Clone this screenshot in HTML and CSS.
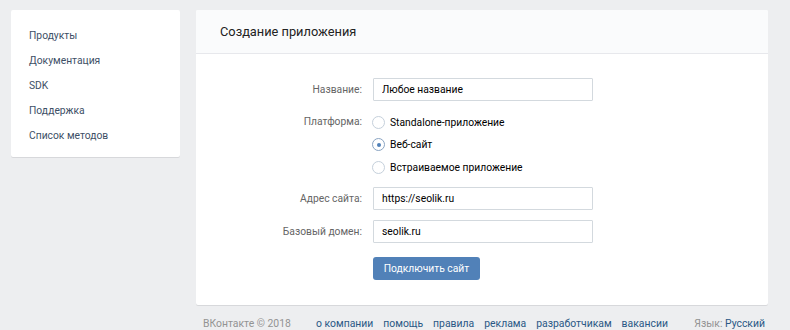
FILE: index.html
```html
<!DOCTYPE html>
<html lang="ru">
<head>
    <meta charset="UTF-8">
    <title>Создание приложения</title>
    <link rel="stylesheet" href="styles.css">
</head>
<body>

<div class="page">
    <div class="side">
        <a class="side-link" href="#">Продукты</a>
        <a class="side-link" href="#">Документация</a>
        <a class="side-link" href="#">SDK</a>
        <a class="side-link" href="#">Поддержка</a>
        <a class="side-link" href="#">Список методов</a>
    </div>

    <div class="main">
        <div class="card">
            <div class="card-head">Создание приложения</div>
            <div class="form">
                <div class="row">
                    <div class="label">Название:</div>
                    <div class="field"><input class="input" type="text" value="Любое название"></div>
                </div>
                <div class="row row-top">
                    <div class="label label-radio">Платформа:</div>
                    <div class="field">
                        <label class="radio"><span class="dot"></span>Standalone-приложение</label>
                        <label class="radio on"><span class="dot"></span>Веб-сайт</label>
                        <label class="radio"><span class="dot"></span>Встраиваемое приложение</label>
                    </div>
                </div>
                <div class="row">
                    <div class="label">Адрес сайта:</div>
                    <div class="field"><input class="input" type="text" value="https://seolik.ru"></div>
                </div>
                <div class="row">
                    <div class="label">Базовый домен:</div>
                    <div class="field"><input class="input" type="text" value="seolik.ru"></div>
                </div>
                <div class="row row-btn">
                    <div class="label"></div>
                    <div class="field"><button class="btn">Подключить сайт</button></div>
                </div>
            </div>
        </div>

        <div class="footer">
            <span class="copy">ВКонтакте © 2018</span>
            <span class="links">
                <a href="#">о компании</a>
                <a href="#">помощь</a>
                <a href="#">правила</a>
                <a href="#">реклама</a>
                <a href="#">разработчикам</a>
                <a href="#">вакансии</a>
            </span>
            <span class="lang">Язык: <a href="#">Русский</a></span>
        </div>
    </div>
</div>

</body>
</html>
```

FILE: styles.css
```css
/* общий фон */
body {
    margin: 0;
    background-color: #edeef0;
    font-family: Roboto, "Open Sans", Arial, sans-serif;
    font-size: 10.3px;
    color: #000;
}
a {
    text-decoration: none;
}
.page {
    display: flex;
    align-items: flex-start;
    gap: 16px;
    padding: 10px 0 0 11px;
}

/* левое меню */
.side {
    width: 169px;
    box-sizing: border-box;
    padding: 13px 0 9px 18px;
    background-color: #fff;
    border-radius: 2px;
    box-shadow: 0 1px 0 0 #d7d8db;
}
.side-link {
    display: block;
    line-height: 25px;
    color: #3d4f66;
}

/* основная карточка */
.main {
    width: 572px;
}
.card {
    background-color: #fff;
    border-radius: 2px;
    box-shadow: 0 1px 0 0 #d7d8db;
}
.card-head {
    height: 43px;
    line-height: 44px;
    padding-left: 24px;
    font-size: 12.8px;
    color: #222;
    background-color: #fafbfc;
    border-bottom: 1px solid #e7e8ec;
    border-radius: 2px 2px 0 0;
}
.form {
    padding: 24px 0 25px;
}
.row {
    display: flex;
    align-items: center;
    margin-bottom: 10px;
}
.row-top {
    align-items: flex-start;
    margin-bottom: 8px;
}
.row-btn {
    margin-top: 14px;
    margin-bottom: 0;
}
.label {
    width: 166px;
    flex-shrink: 0;
    text-align: right;
    color: #656565;
}
.label-radio {
    line-height: 22px;
}
.field {
    margin-left: 11px;
}
.input {
    display: block;
    width: 220px;
    height: 23px;
    box-sizing: border-box;
    padding: 0 8px;
    border: 1px solid #d3d9de;
    border-radius: 1px;
    font-family: inherit;
    font-size: 10.3px;
    color: #000;
}

/* радиокнопки */
.radio {
    display: flex;
    align-items: center;
    height: 22.5px;
    color: #000;
}
.dot {
    width: 11px;
    height: 11px;
    border: 1px solid #c5d0db;
    border-radius: 50%;
    margin: 0 5px 0 -1px;
    box-sizing: content-box;
    position: relative;
}
.radio.on .dot {
    border-color: #8aa4c2;
}
.radio.on .dot::after {
    content: "";
    position: absolute;
    left: 3.5px;
    top: 3.5px;
    width: 4px;
    height: 4px;
    border-radius: 50%;
    background-color: #5181b8;
}

.btn {
    display: block;
    width: 107px;
    height: 23px;
    padding: 0;
    border: none;
    border-radius: 3px;
    background-color: #5181b8;
    color: #fff;
    font-family: inherit;
    font-size: 10.3px;
}

/* подвал */
.footer {
    display: flex;
    align-items: center;
    height: 38px;
    padding: 0 3px 0 7px;
    font-size: 10.4px;
    color: #939393;
    white-space: nowrap;
}
.copy {
    width: 113px;
}
.links {
    display: flex;
    gap: 10px;
}
.links a, .lang a {
    color: #2a5885;
}
.lang {
    margin-left: auto;
}
```
